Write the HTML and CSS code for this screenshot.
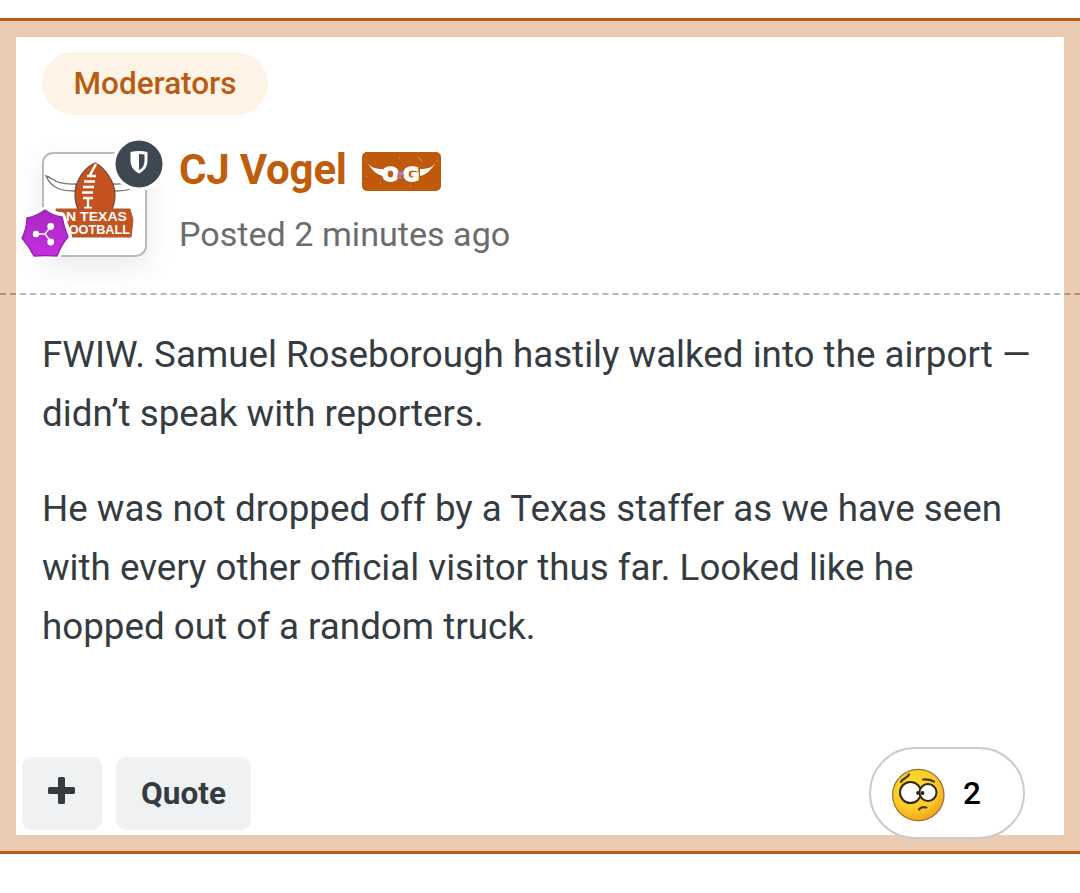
FILE: index.html
```html
<!DOCTYPE html>
<html lang="en">
<head>
<meta charset="utf-8">
<title>CJ Vogel - Forum post</title>
<link rel="stylesheet" href="styles.css">
</head>
<body>
	<article class="post">
		<header class="post-header">
			<span class="group">Moderators</span>
			<div class="author">
				<div class="avatar">
					<svg class="avatar-photo" viewBox="0 0 101 101">
						<path d="M2 22 C10 24 10 31 32 30 L32 37 C20 37 8 36 2 22Z M99 22 C91 24 90 31 69 30 L70 37 C82 37 93 36 99 22Z" fill="#fff" stroke="#77736e" stroke-width="1.3"/>
						<path d="M51 9 C60 13 71 27 71 41 C71 48 69 54 66 60 H36 C33 54 31 48 31 41 C31 27 40 14 51 9Z" fill="#c5531f" stroke="#73482f" stroke-width="1.2"/>
						<path d="M52 10 L46 21 M43 22 h9 M40 27.500 h11 M39 33 h11 M38 38.500 h11 M39 44 h10 M44 44 v9 M40 54 h8" fill="none" stroke="#fff" stroke-width="2.4"/>
						<path d="M12 55 H86 L89 66 L87 83 H12Z" fill="#c5531f" stroke="#a55a37"/>
						<text x="11" y="66.500" textLength="72" lengthAdjust="spacingAndGlyphs">ON TEXAS</text>
						<text x="17" y="79.700" textLength="69" lengthAdjust="spacingAndGlyphs">FOOTBALL</text>
					</svg>
					<svg class="mod-badge" viewBox="0 0 54 54">
						<circle cx="27" cy="27" r="27" fill="#fff"/>
						<circle cx="27" cy="27" r="23.5" fill="#3d4852"/>
						<path d="M18.500 15 Q27 13 35.500 15 V23 C35.500 30 32 34 27 36.500 C22 34 18.500 30 18.500 23Z" fill="#fff"/>
						<path d="M27 17 L32.500 17.500 V23 C32.500 28 31 31 27 33Z" fill="#3d4852"/>
					</svg>
					<svg class="rank-badge" viewBox="0 0 54 54">
						<defs>
							<linearGradient id="rank" x1="0" y1="0" x2="0" y2="1">
								<stop offset="0" stop-color="#a928c4"/>
								<stop offset="1" stop-color="#c42fdd"/>
							</linearGradient>
						</defs>
						<path d="M27 3 L44 11 L50 29 L39 48 L16 48 L4 31 L9 12Z" fill="#fff" stroke="#fff" stroke-width="8" stroke-linejoin="round"/>
						<path d="M27 3 Q35 9 44 10 Q46 21 50 30 Q43 38 39 49 Q28 48 16 49 Q11 39 4 31 Q9 22 9 11 Q19 9 27 3Z" fill="url(#rank)" stroke="#9a23b3" stroke-width="1.5" stroke-linejoin="round"/>
						<path d="M18 27 H27 L33 19.500 M27 27 L33 35" fill="none" stroke="#fff" stroke-width="1.4"/>
						<circle cx="18" cy="27" r="3.2" fill="#fff"/>
						<circle cx="32.700" cy="19.500" r="3.400" fill="#fff"/>
						<circle cx="32.700" cy="35" r="3.400" fill="#fff"/>
					</svg>
				</div>
				<div class="author-info">
					<div class="author-name">
						<h3>CJ Vogel</h3>
						<svg class="og" viewBox="0 0 79 39">
							<rect width="79" height="39" rx="5" fill="#bf5a0c"/>
							<path d="M2 6 C7 15 12 17 21 17 L21 24 C12 22 9 16 2 6Z M77 6 C72 15 67 17 58 17 L58 24 C67 22 70 16 77 6Z" fill="#fff"/>
							<text class="og-text" x="20" y="28.500">O</text>
							<text class="og-text" x="41" y="28.500">G</text>
							<path d="M36 19 l2 1 l3 -1 l1 5 l-3 0 l1 3 l-5 -1Z" fill="#c4788a"/>
							<path d="M36 19 h5 M36 24 h6" stroke="#777b9e"/>
							<path d="M56 5 l4 4 M5 24 v1 M18 31 h1 M37 6 h1 M48 34 h1" stroke="#e2a06b"/>
						</svg>
					</div>
					<p class="date">Posted 2 minutes ago</p>
				</div>
			</div>
		</header>
		<svg class="divider" viewBox="0 0 1080 2">
			<path d="M0 1 H1080" stroke="#000" stroke-opacity=".27" stroke-width="2" stroke-dasharray="6.02 4.02"/>
		</svg>
		<div class="content">
			<p>FWIW. Samuel Roseborough hastily walked into the airport —<br>didn’t speak with reporters.</p>
			<p>He was not dropped off by a Texas staffer as we have seen<br>with every other official visitor thus far. Looked like he<br>hopped out of a random truck.</p>
		</div>
		<footer class="controls">
			<button class="btn btn-plus" aria-label="Multiquote">
				<svg viewBox="0 0 27 27"><path d="M11.500 0 h4 a1.500 1.500 0 0 1 1.500 1.500 V10 h8.500 a1.500 1.500 0 0 1 1.500 1.500 v4 a1.500 1.500 0 0 1 -1.500 1.500 H17 v8.500 a1.500 1.500 0 0 1 -1.500 1.500 h-4 a1.500 1.500 0 0 1 -1.500 -1.500 V17 H1.500 a1.500 1.500 0 0 1 -1.500 -1.500 v-4 a1.500 1.500 0 0 1 1.500 -1.500 H10 V1.500 a1.500 1.500 0 0 1 1.500 -1.500Z" fill="#353c41"/></svg>
			</button>
			<button class="btn btn-quote">Quote</button>
			<div class="reactions">
				<svg viewBox="0 0 54 54">
					<defs>
						<radialGradient id="face" cx=".42" cy=".35" r=".7">
							<stop offset="0" stop-color="#ffdc35"/>
							<stop offset=".65" stop-color="#fbc926"/>
							<stop offset="1" stop-color="#ee9a1c"/>
						</radialGradient>
					</defs>
					<circle cx="27.300" cy="27" r="25.700" fill="url(#face)" stroke="#94702b" stroke-width="1.2"/>
					<circle cx="19.500" cy="24.500" r="10.500" fill="#fff" stroke="#32270c" stroke-width="2"/>
					<circle cx="37" cy="24.500" r="8.500" fill="#fff" stroke="#32270c" stroke-width="2"/>
					<circle cx="27" cy="25" r="1.900" fill="#2c240d"/>
					<circle cx="31.500" cy="25" r="1.900" fill="#2c240d"/>
					<path d="M10 14 C11 10 16 11 18 6.500 M32 11.500 C36 11 39 11.500 43 13.500 M28 41.500 C30 38.500 32 38.500 35.500 39.500" fill="none" stroke="#4a3a12" stroke-width="2.200" stroke-linecap="round"/>
				</svg>
				<span>2</span>
			</div>
		</footer>
	</article>
</body>
</html>
```
FILE: styles.css
```css
body {
	margin: 0;
	padding-top: 18px;
	background: #fff;
	color: #353c41;
	font-family: Roboto, sans-serif;
}

* {
	box-sizing: border-box;
}

h3, p {
	margin: 0;
}

.post {
	display: flex;
	flex-direction: column;
	height: 836px;
	border-top: 3px solid #b85c1b;
	border-bottom: 3px solid #b85c1b;
	box-shadow: inset 0 0 0 16px #ebccb3;
}

.post-header {
	height: 272px;
	padding: 31px 42px 0;
}

.group {
	display: flex;
	align-items: center;
	justify-content: center;
	width: 226px;
	height: 63px;
	border-radius: 32px;
	background: #fdf4e7;
	color: #b85c14;
	font-size: 31.5px;
	font-weight: 500;
}

.author {
	display: flex;
	gap: 32px;
	margin-top: 37px;
}

.avatar {
	position: relative;
	width: 105px;
	height: 105px;
	border: 2px solid #b9babb;
	border-radius: 11px;
	background: #fff;
	box-shadow: 0 10px 30px rgba(0, 0, 0, 0.09);
}

.avatar-photo {
	display: block;
	width: 101px;
	height: 101px;
	font-family: "Liberation Sans", sans-serif;
	font-size: 13px;
	font-weight: bold;
	fill: #fff;
}

.mod-badge, .rank-badge {
	position: absolute;
	width: 54px;
	height: 54px;
}

.mod-badge {
	top: -17px;
	left: 68px;
}

.rank-badge {
	top: 53px;
	left: -26px;
}

.author-name {
	display: flex;
	gap: 15px;
	height: 39px;
}

.author-name h3 {
	color: #bf5d0c;
	font-size: 42px;
	font-weight: 700;
	letter-spacing: -0.2px;
	line-height: 35px;
}

.og {
	width: 79px;
	height: 39px;
}

.og-text {
	fill: #fff;
	font-family: "DejaVu Sans", sans-serif;
	font-size: 20px;
	font-weight: bold;
	stroke: #fff;
	stroke-width: 1.5px;
}

.date {
	margin-top: 23px;
	color: #6c6c6c;
	font-size: 34.125px;
	line-height: 40px;
}

.divider {
	display: block;
	height: 2px;
}

.content {
	padding: 30px 42px 0;
	font-size: 36.75px;
	line-height: 59px;
	white-space: nowrap;
}

.content p + p {
	margin-top: 36px;
}

.controls {
	display: flex;
	align-items: center;
	gap: 14px;
	height: 92px;
	margin-top: auto;
	margin-bottom: 12px;
	padding: 0 55px 0 22px;
}

.btn {
	display: flex;
	align-items: center;
	justify-content: center;
	height: 73px;
	padding: 0;
	border: 0;
	border-radius: 10px;
	background: #f0f1f3;
	color: #353c41;
	font-family: inherit;
	font-size: 31.5px;
	font-weight: 700;
}

.btn-plus {
	width: 80px;
	padding-right: 1px;
	padding-bottom: 5px;
}

.btn-plus svg {
	width: 27px;
	height: 27px;
}

.btn-quote {
	width: 135px;
}

.reactions {
	display: flex;
	align-items: center;
	gap: 18px;
	width: 156px;
	height: 92px;
	margin-left: auto;
	padding-left: 20px;
	border: 2px solid #c8cbd1;
	border-radius: 46px;
	background: #fff;
	color: #000;
	font-size: 31.5px;
	font-weight: 500;
}

.reactions svg {
	width: 54px;
	height: 54px;
	margin-top: 3px;
}
```
